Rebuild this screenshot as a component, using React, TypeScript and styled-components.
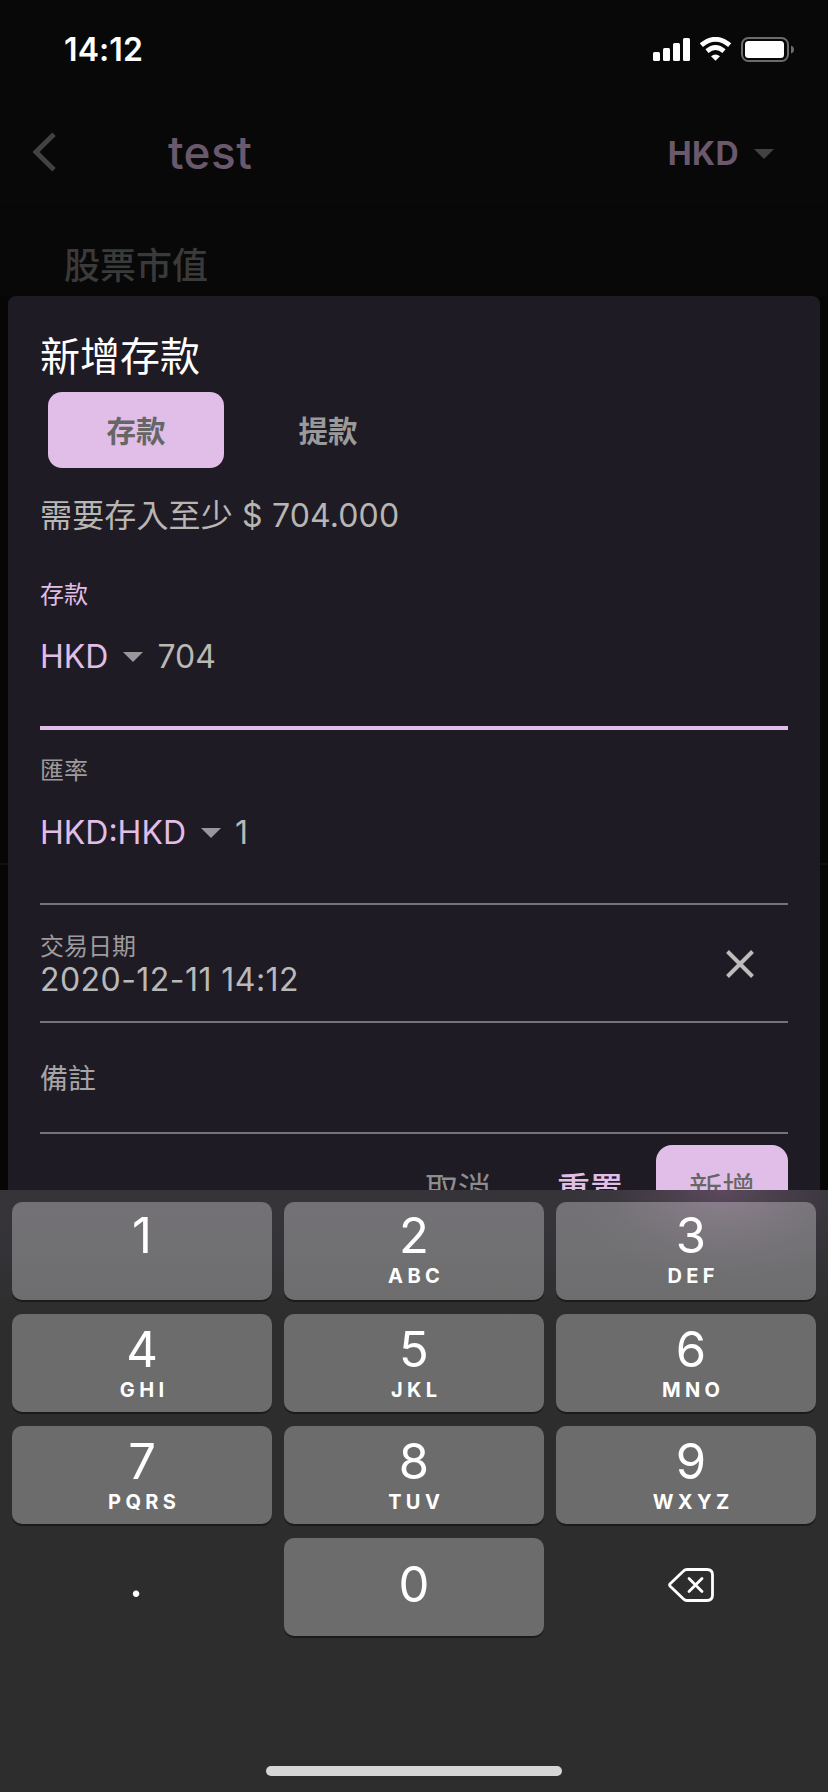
import React from "react";
import styled, { createGlobalStyle } from "styled-components";

const GlobalStyle = createGlobalStyle`
  * { box-sizing: border-box; }
  body {
    margin: 0;
    background: #080808;
    font-family: Inter, "Noto Sans CJK TC", sans-serif;
    -webkit-font-smoothing: antialiased;
  }
  button { font-family: inherit; border: 0; padding: 0; background: none; }
`;

const Screen = styled.div`
  width: 828px;
  height: 1792px;
  display: flex;
  flex-direction: column;
  overflow: hidden;
  background: #080808;
`;

const StatusBar = styled.div`
  height: 100px;
  padding: 30px 33px 30px 64px;
  display: flex;
  align-items: center;
  justify-content: space-between;
`;

const Clock = styled.span`
  font-size: 32px;
  font-weight: 600;
  line-height: 40px;
  letter-spacing: 0.1px;
  color: #fff;
`;

const Header = styled.header`
  height: 108px;
  padding: 0 54px 0 32px;
  display: flex;
  align-items: center;
  border-bottom: 2px solid #070707;
`;

const BackIcon = styled.svg`
  width: 24px;
  height: 42px;
  margin: 0 112px 2px 0;
`;

const PageTitle = styled.h1`
  flex: 1;
  margin: 0;
  padding-bottom: 3px;
  font-size: 46px;
  font-weight: 450;
  line-height: 60px;
  letter-spacing: 0.4px;
  color: #6a586c;
`;

const HeaderCurrency = styled.div`
  display: flex;
  align-items: center;
  gap: 15px;
  padding-top: 2px;
  font-size: 32px;
  font-weight: 700;
  line-height: 40px;
  letter-spacing: 0.4px;
  color: #6a586c;
`;

const Caret = styled.span<{ $color: string }>`
  width: 0;
  height: 0;
  border: 10px solid transparent;
  border-top-color: ${(p) => p.$color};
  border-bottom: 0;
`;

const SectionLabel = styled.div`
  height: 88px;
  padding: 34px 64px 0;
  font-size: 36px;
  font-weight: 500;
  line-height: 48px;
  color: #3a3a3a;
`;

const DialogLayer = styled.div`
  height: 894px;
  padding: 0 8px;
  overflow: hidden;
  background: linear-gradient(#101010, #101010) 0 567px / 100% 2px no-repeat #060606;
`;

const Dialog = styled.section`
  height: 1000px;
  padding: 37px 32px 0;
  display: flex;
  flex-direction: column;
  border-radius: 8px 8px 0 0;
  background: #1f1b24;
`;

const DialogTitle = styled.h2`
  margin: 0;
  font-size: 40px;
  font-weight: 400;
  line-height: 48px;
  color: #fff;
`;

const ToggleRow = styled.div`
  display: flex;
  gap: 16px;
  padding: 11px 8px 0;
`;

const Toggle = styled.button<{ $active?: boolean }>`
  width: 176px;
  height: 76px;
  padding-top: 1px;
  border-radius: 14px;
  font-size: 29.5px;
  font-weight: 600;
  line-height: 40px;
  color: ${(p) => (p.$active ? "#666" : "#9a9a9a")};
  background: ${(p) => (p.$active ? "#e1bee7" : "transparent")};
`;

const Hint = styled.p`
  margin: 28px 0 47px;
  font-size: 32px;
  line-height: 40px;
  letter-spacing: 0.15px;
  color: #b8b6b4;
`;

const Field = styled.div<{ $focused?: boolean; $top?: number; $bottom?: number }>`
  padding-top: ${(p) => p.$top ?? 0}px;
  padding-bottom: ${(p) => p.$bottom ?? 0}px;
  border-bottom: ${(p) => (p.$focused ? "4px solid #e1bee7" : "2px solid #757377")};
`;

const FieldLabel = styled.div<{ $focused?: boolean }>`
  font-size: 24px;
  line-height: 24px;
  color: ${(p) => (p.$focused ? "#e1bee7" : "#9d9b9e")};
`;

const Placeholder = styled.div`
  font-size: 28px;
  line-height: 36px;
  color: #a5a4a7;
`;

const ValueRow = styled.div`
  display: flex;
  align-items: center;
  margin-top: 30px;
  font-size: 32px;
  line-height: 40px;
`;

const Currency = styled.span`
  margin-right: 15px;
  color: #e1bee7;
`;

const Value = styled.span`
  margin-left: 14px;
  color: #b8b8b4;
`;

const DateField = styled(Field)`
  display: flex;
  align-items: center;
  justify-content: space-between;
  padding-right: 34px;
`;

const DateValue = styled.div`
  padding-top: 1px;
  font-size: 32px;
  line-height: 40px;
  letter-spacing: 0.45px;
  color: #b9b9b9;
`;

const CloseIcon = styled.svg`
  width: 28px;
  height: 28px;
  margin-bottom: 8px;
`;

const Actions = styled.div`
  display: flex;
  justify-content: flex-end;
  margin-top: 11px;
`;

const Action = styled.button<{ $color: string; $filled?: boolean }>`
  width: 132px;
  height: 88px;
  border-radius: 16px;
  font-size: 33px;
  font-weight: ${(p) => (p.$color === "#e1bee7" ? 500 : 400)};
  line-height: 40px;
  color: ${(p) => p.$color};
  background: ${(p) => (p.$filled ? "#e1bee7" : "transparent")};
`;

const Keyboard = styled.div`
  flex: 1;
  padding: 12px 12px 16px;
  display: flex;
  flex-direction: column;
  justify-content: space-between;
  align-items: center;
  background:
    radial-gradient(
      ellipse 150px 90px at 722px 0,
      rgba(160, 115, 160, 0.34),
      rgba(160, 115, 160, 0.15) 45%,
      rgba(160, 115, 160, 0.04) 75%,
      rgba(160, 115, 160, 0)
    ),
    linear-gradient(#363439 0, #343337 60px, #2d2d2d 130px);
`;

const Keys = styled.div`
  display: grid;
  grid-template-columns: repeat(3, 260px);
  grid-auto-rows: 98px;
  gap: 14px 12px;
`;

const Key = styled.button<{ $plain?: boolean; $shift?: number; $top?: number }>`
  display: flex;
  flex-direction: column;
  align-items: center;
  padding-top: ${(p) => p.$top ?? 6}px;
  padding-left: ${(p) => Math.max(p.$shift ?? 0, 0)}px;
  padding-right: ${(p) => Math.max(-(p.$shift ?? 0), 0)}px;
  border-radius: 10px;
  color: #fff;
  background: ${(p) => (p.$plain ? "none" : "rgba(255, 255, 255, 0.3)")};
  box-shadow: ${(p) => (p.$plain ? "none" : "0 2px 0 #1b1b1b")};
`;

const Digit = styled.span`
  font-size: 49px;
  font-weight: 400;
  line-height: 60px;
`;

const Letters = styled.span`
  margin: 1px -4.4px 0 0;
  font-size: 20px;
  font-weight: 650;
  line-height: 18px;
  letter-spacing: 4.4px;
`;

const HomeIndicator = styled.div`
  width: 296px;
  height: 10px;
  border-radius: 5px;
  background: #d6d6d6;
`;

const keys = [
  ["1", ""], ["2", "ABC"], ["3", "DEF"],
  ["4", "GHI"], ["5", "JKL"], ["6", "MNO"],
  ["7", "PQRS"], ["8", "TUV"], ["9", "WXYZ"],
];

const StatusIcons = () => (
  <svg width="142" height="26" viewBox="0 0 142 26">
    <g fill="#fff">
      <rect x="0" y="15" width="7" height="9" rx="1.5" />
      <rect x="10" y="11" width="7" height="13" rx="1.5" />
      <rect x="20" y="6" width="7" height="18" rx="1.5" />
      <rect x="30" y="1" width="7" height="23" rx="1.5" />
      <path d="M62.5 23.8 L58 19.3 Q62.5 15.6 67 19.3 Z" />
    </g>
    <g fill="none" stroke="#fff" strokeWidth="4.8">
      <path d="M48.3 8.2 Q62.5 -3.6 76.7 8.2" />
      <path d="M54 14.2 Q62.5 7 71 14.2" />
    </g>
    <rect x="89" y="1" width="46" height="23" rx="6.5" fill="none" stroke="#6b6b6b" strokeWidth="2" />
    <rect x="92" y="4" width="39" height="17" rx="3.5" fill="#fff" />
    <path d="M138 8.5 Q141 9.5 141 12.5 Q141 15.5 138 16.5 Z" fill="#6b6b6b" />
  </svg>
);

const DeleteIcon = () => (
  <svg width="48" height="36" viewBox="0 0 48 36" fill="none" stroke="#fff" strokeWidth="2.8" strokeLinecap="round" strokeLinejoin="round">
    <path d="M20 2.5 H40 Q45.5 2.5 45.5 8 V28 Q45.5 33.5 40 33.5 H20 Q18 33.5 16.5 32 L3.2 19.3 Q2 18 3.2 16.7 L16.5 4 Q18 2.5 20 2.5 Z" />
    <path d="M22 11.5 L35 24.5 M35 11.5 L22 24.5" />
  </svg>
);

export default function App() {
  return (
    <Screen>
      <GlobalStyle />
      <StatusBar>
        <Clock>14:12</Clock>
        <StatusIcons />
      </StatusBar>
      <Header>
        <BackIcon viewBox="0 0 24 42" fill="none" stroke="#424242" strokeWidth="5">
          <path d="M22 3.2 L4 21 L22 38.8" />
        </BackIcon>
        <PageTitle>test</PageTitle>
        <HeaderCurrency>
          HKD
          <Caret $color="#424242" />
        </HeaderCurrency>
      </Header>
      <SectionLabel>股票市值</SectionLabel>
      <DialogLayer>
        <Dialog>
          <DialogTitle>新增存款</DialogTitle>
          <ToggleRow>
            <Toggle $active>存款</Toggle>
            <Toggle>提款</Toggle>
          </ToggleRow>
          <Hint>需要存入至少 $ 704.000</Hint>
          <Field $focused $bottom={49}>
            <FieldLabel $focused>存款</FieldLabel>
            <ValueRow>
              <Currency>HKD</Currency>
              <Caret $color="#99979b" />
              <Value>704</Value>
            </ValueRow>
          </Field>
          <Field $top={29} $bottom={50}>
            <FieldLabel>匯率</FieldLabel>
            <ValueRow>
              <Currency>HKD:HKD</Currency>
              <Caret $color="#99979b" />
              <Value>1</Value>
            </ValueRow>
          </Field>
          <DateField $top={30} $bottom={21}>
            <div>
              <FieldLabel>交易日期</FieldLabel>
              <DateValue>2020-12-11 14:12</DateValue>
            </div>
            <CloseIcon viewBox="0 0 28 28" stroke="#bcbcbc" strokeWidth="4">
              <path d="M1.5 1.5 L26.5 26.5 M26.5 1.5 L1.5 26.5" />
            </CloseIcon>
          </DateField>
          <Field $top={38} $bottom={35}>
            <Placeholder>備註</Placeholder>
          </Field>
          <Actions>
            <Action $color="#8d8d8d">取消</Action>
            <Action $color="#e1bee7">重置</Action>
            <Action $color="#666666" $filled>新增</Action>
          </Actions>
        </Dialog>
      </DialogLayer>
      <Keyboard>
        <Keys>
          {keys.map(([digit, letters], i) => (
            <Key key={digit} $shift={i % 3 === 2 ? 10 : 0} $top={i < 3 ? 4 : 6}>
              <Digit>{digit}</Digit>
              <Letters>{letters}</Letters>
            </Key>
          ))}
          <Key $plain $shift={-12} $top={12}>
            <Digit>.</Digit>
          </Key>
          <Key $top={17}>
            <Digit>0</Digit>
          </Key>
          <Key $plain $shift={10} $top={29}>
            <DeleteIcon />
          </Key>
        </Keys>
        <HomeIndicator />
      </Keyboard>
    </Screen>
  );
}
